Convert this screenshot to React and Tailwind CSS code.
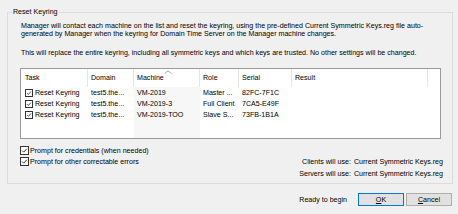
import React from "react";

const rows = [
  { task: "Reset Keyring", domain: "test5.the...", machine: "VM-2019", role: "Master ...", serial: "82FC-7F1C" },
  { task: "Reset Keyring", domain: "test5.the...", machine: "VM-2019-3", role: "Full Client", serial: "7CA5-E49F" },
  { task: "Reset Keyring", domain: "test5.the...", machine: "VM-2019-TOO", role: "Slave S...", serial: "73FB-1B1A" },
];

const columns = [
  { key: "task", label: "Task", width: "w-[67px]", pad: "pl-[4px]" },
  { key: "domain", label: "Domain", width: "w-[46px]", pad: "pl-[3px]" },
  { key: "machine", label: "Machine", width: "w-[66px]", pad: "pl-[3px]", sorted: true },
  { key: "role", label: "Role", width: "w-[39px]", pad: "pl-[3px]" },
  { key: "serial", label: "Serial", width: "w-[53px]", pad: "pl-[3px]" },
  { key: "result", label: "Result", width: "w-[136px]", pad: "pl-[3px]" },
];

function Check({ size = "w-[8px] h-[8px]" }) {
  return (
    <span className={`${size} shrink-0 border border-[#333333] bg-white flex items-center justify-center`}>
      <svg viewBox="0 0 8 8" className="w-full h-full">
        <polyline points="1.3,4.1 3.1,5.9 6.6,2" fill="none" stroke="#222222" strokeWidth="1" />
      </svg>
    </span>
  );
}

function Column({ col }) {
  return (
    <div className={`${col.width} shrink-0 flex flex-col`}>
      <div className={`relative h-[18px] flex items-center border-r border-[#e5e5e5] ${col.pad}`}>
        {col.sorted && (
          <svg viewBox="0 0 8 4" className="absolute top-[1px] left-[30px] w-[8px] h-[4px]">
            <polyline points="0.5,3.5 4,0.8 7.5,3.5" fill="none" stroke="#a0a7ae" strokeWidth="1" />
          </svg>
        )}
        {col.label}
      </div>
      <div className={`flex-1 ${col.sorted ? "bg-[#f7f7f7]" : ""}`}>
        {col.key !== "result" &&
          rows.map((r, i) => (
            <div key={i} className={`h-[11px] flex items-center gap-[2px] whitespace-nowrap ${col.pad}`}>
              {col.key === "task" && <Check />}
              {r[col.key]}
            </div>
          ))}
      </div>
    </div>
  );
}

export default function App() {
  return (
    <div className="w-[458px] h-[214px] overflow-hidden bg-[#f0f0f0] text-black font-['Liberation_Sans',Arial,sans-serif] text-[7.1px] leading-[8px]">
      <div className="pl-[7px] pr-[5px] pt-[7px]">
        <fieldset className="h-[177px] border border-[#dcdcdc] p-0 m-0">
          <legend className="ml-[4px] px-[1px] leading-[10px]">Reset Keyring</legend>
          <div className="pl-[12px] pr-[8px] pt-[5px]">
            <p className="pl-[1px] whitespace-nowrap">
              Manager will contact each machine on the list and reset the keyring, using the pre-defined Current Symmetric Keys.reg file auto-
              <br />
              generated by Manager when the keyring for Domain Time Server on the Manager machine changes.
            </p>
            <p className="pl-[1px] mt-[11px] whitespace-nowrap">
              This will replace the entire keyring, including all symmetric keys and which keys are trusted. No other settings will be changed.
            </p>

            <div className="mt-[11px] w-[421px] h-[71px] border border-[#9a9a9a] bg-white flex">
              {columns.map((c) => (
                <Column key={c.key} col={c} />
              ))}
              <div className="flex-1" />
            </div>

            <div className="flex justify-between items-start mt-[6px]">
              <div className="flex flex-col">
                <label className="h-[11px] flex items-center gap-[1px]">
                  <Check size="w-[9px] h-[9px]" />
                  Prompt for credentials (when needed)
                </label>
                <label className="h-[11px] flex items-center gap-[1px]">
                  <Check size="w-[9px] h-[9px]" />
                  Prompt for other correctable errors
                </label>
              </div>
              <div className="mt-[11px] pr-[1px] grid grid-cols-[auto_auto] gap-x-[3px] leading-[12px]">
                <span className="text-right">Clients will use:</span>
                <span>Current Symmetric Keys.reg</span>
                <span className="text-right">Servers will use:</span>
                <span>Current Symmetric Keys.reg</span>
              </div>
            </div>
          </div>
        </fieldset>
      </div>

      <div className="flex justify-end items-center pr-[6px] mt-[9px]">
        <span className="mr-[11px]">Ready to begin</span>
        <button type="button" className="w-[46px] h-[13px] border border-[#0078d7] bg-[#e1e1e1] flex items-center justify-center">
          <span className="underline">O</span>K
        </button>
        <button type="button" className="ml-[2px] w-[46px] h-[13px] border border-[#adadad] bg-[#e1e1e1] flex items-center justify-center">
          <span className="underline">C</span>ancel
        </button>
      </div>
    </div>
  );
}
